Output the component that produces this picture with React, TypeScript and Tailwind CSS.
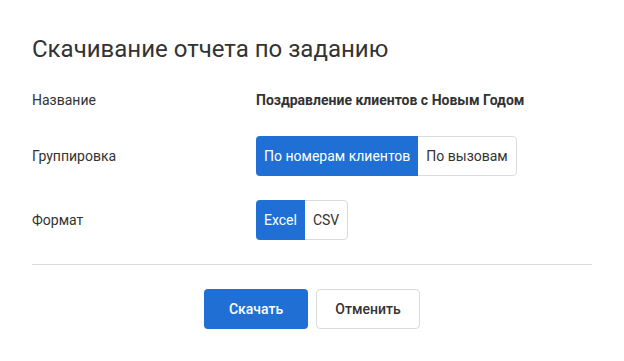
import { useState } from "react";

type Option = { value: string; label: string };

function Segmented({
  options,
  value,
  onChange,
}: {
  options: Option[];
  value: string;
  onChange: (v: string) => void;
}) {
  return (
    <div className="inline-flex h-10 overflow-hidden rounded-[4px]">
      {options.map((opt, i) => {
        const active = opt.value === value;
        const last = i === options.length - 1;
        return (
          <button
            key={opt.value}
            type="button"
            onClick={() => onChange(opt.value)}
            className={
              active
                ? "h-10 bg-[#1f6fd5] px-2 text-[14px] text-white"
                : "h-10 border-y border-[#dadada] bg-white px-2 text-[14px] text-[#333] " +
                  (last ? "rounded-r-[4px] border-r" : "border-r")
            }
          >
            {opt.label}
          </button>
        );
      })}
    </div>
  );
}

export default function App() {
  const [group, setGroup] = useState("clients");
  const [format, setFormat] = useState("excel");

  return (
    <div className="h-[361px] w-[624px] bg-white px-8 pt-[33px] font-['Roboto',sans-serif] text-[#333]">
      <h1 className="text-[24px] leading-8 text-[#333]">Скачивание отчета по заданию</h1>

      <div className="mt-[25px] flex items-center">
        <span className="w-[224px] text-[14px] leading-5">Название</span>
        <span className="text-[14px] font-bold leading-5">Поздравление клиентов с Новым Годом</span>
      </div>

      <div className="mt-[26px] flex items-center">
        <span className="w-[224px] text-[14px] leading-5">Группировка</span>
        <Segmented
          value={group}
          onChange={setGroup}
          options={[
            { value: "clients", label: "По номерам клиентов" },
            { value: "calls", label: "По вызовам" },
          ]}
        />
      </div>

      <div className="mt-6 flex items-center">
        <span className="w-[224px] text-[14px] leading-5">Формат</span>
        <Segmented
          value={format}
          onChange={setFormat}
          options={[
            { value: "excel", label: "Excel" },
            { value: "csv", label: "CSV" },
          ]}
        />
      </div>

      <div className="mt-6 border-t border-[#dcdcdc]" />

      <div className="mt-6 flex justify-center gap-2">
        <button
          type="button"
          className="h-10 w-[104px] rounded-[4px] bg-[#1f6fd5] text-[14px] font-medium text-white"
        >
          Скачать
        </button>
        <button
          type="button"
          className="h-10 w-[104px] rounded-[4px] border border-[#dadada] bg-white text-[14px] font-medium text-[#333]"
        >
          Отменить
        </button>
      </div>
    </div>
  );
}
